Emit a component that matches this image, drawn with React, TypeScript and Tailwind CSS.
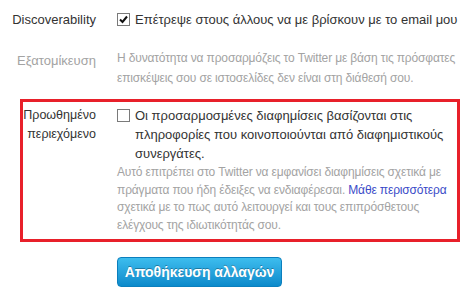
function Box({ checked }: { checked?: boolean }) {
  return (
    <span className="mt-[3px] flex h-[13px] w-[13px] shrink-0 items-center justify-center border border-[#7a7a7a] bg-white">
      {checked && (
        <svg width="9" height="9" viewBox="0 0 9 9">
          <path d="M1 4.5 L3.5 7 L8 1.5" fill="none" stroke="#111" strokeWidth="2" />
        </svg>
      )}
    </span>
  );
}

export default function App() {
  return (
    <div className="h-[301px] w-[472px] overflow-hidden bg-white pt-[10px] font-['Liberation_Sans',Arial,sans-serif] text-[13px] text-[#333]">
      {/* discoverability */}
      <div className="grid grid-cols-[73px_1fr] gap-x-[21px] pl-[23px]">
        <div className="flex flex-col items-end whitespace-nowrap leading-[19px]">
          <span>Discoverability</span>
        </div>
        <label className="flex items-start gap-[5px] leading-[19px]">
          <Box checked />
          <span>Επέτρεψε στους άλλους να με βρίσκουν με το email μου</span>
        </label>
      </div>

      {/* personalization */}
      <div className="mt-[19px] grid grid-cols-[73px_1fr] gap-x-[21px] pl-[23px] text-[#a3a3a3]">
        <div className="flex flex-col items-end whitespace-nowrap pt-[3px] leading-[20px]">
          <span>Εξατομίκευση</span>
        </div>
        <p className="text-[12px] leading-[20px] tracking-[-0.15px]">
          Η δυνατότητα να προσαρμόζεις το Twitter με βάση τις πρόσφατες επισκέψεις σου σε ιστοσελίδες δεν είναι στη διάθεσή σου.
        </p>
      </div>

      {/* promoted content, highlighted */}
      <div className="ml-[20px] mt-[11px] grid w-[440px] grid-cols-[73px_1fr] gap-x-[21px] border-[3px] border-[#e8202a] pb-[5px] pr-[4px] pt-[4px]">
        <div className="flex flex-col items-end whitespace-nowrap text-[12.5px] leading-[19px]">
          <span>Προωθημένο</span>
          <span>περιεχόμενο</span>
        </div>
        <div>
          <label className="flex items-start gap-[5px] leading-[19px]">
            <Box />
            <span>Οι προσαρμοσμένες διαφημίσεις βασίζονται στις πληροφορίες που κοινοποιούνται από διαφημιστικούς συνεργάτες.</span>
          </label>
          <p className="mt-[1px] text-[12px] leading-[17.5px] tracking-[-0.15px] text-[#a3a3a3]">
            Αυτό επιτρέπει στο Twitter να εμφανίσει διαφημίσεις σχετικά με πράγματα που ήδη έδειξες να ενδιαφέρεσαι.{" "}
            <a className="text-[#3a4bc8]">Μάθε περισσότερα</a> σχετικά με το πως αυτό λειτουργεί και τους επιπρόσθετους
            ελέγχους της ιδιωτικότητάς σου.
          </p>
        </div>
      </div>

      <button className="ml-[117px] mt-[15px] block h-[30px] w-[165px] rounded-[4px] border border-[#0b7fbd] bg-gradient-to-b from-[#3cbdee] to-[#0a8acb] text-[14px] font-bold text-white [text-shadow:0_-1px_0_rgba(0,0,0,0.3)]">
        Αποθήκευση αλλαγών
      </button>
    </div>
  );
}
